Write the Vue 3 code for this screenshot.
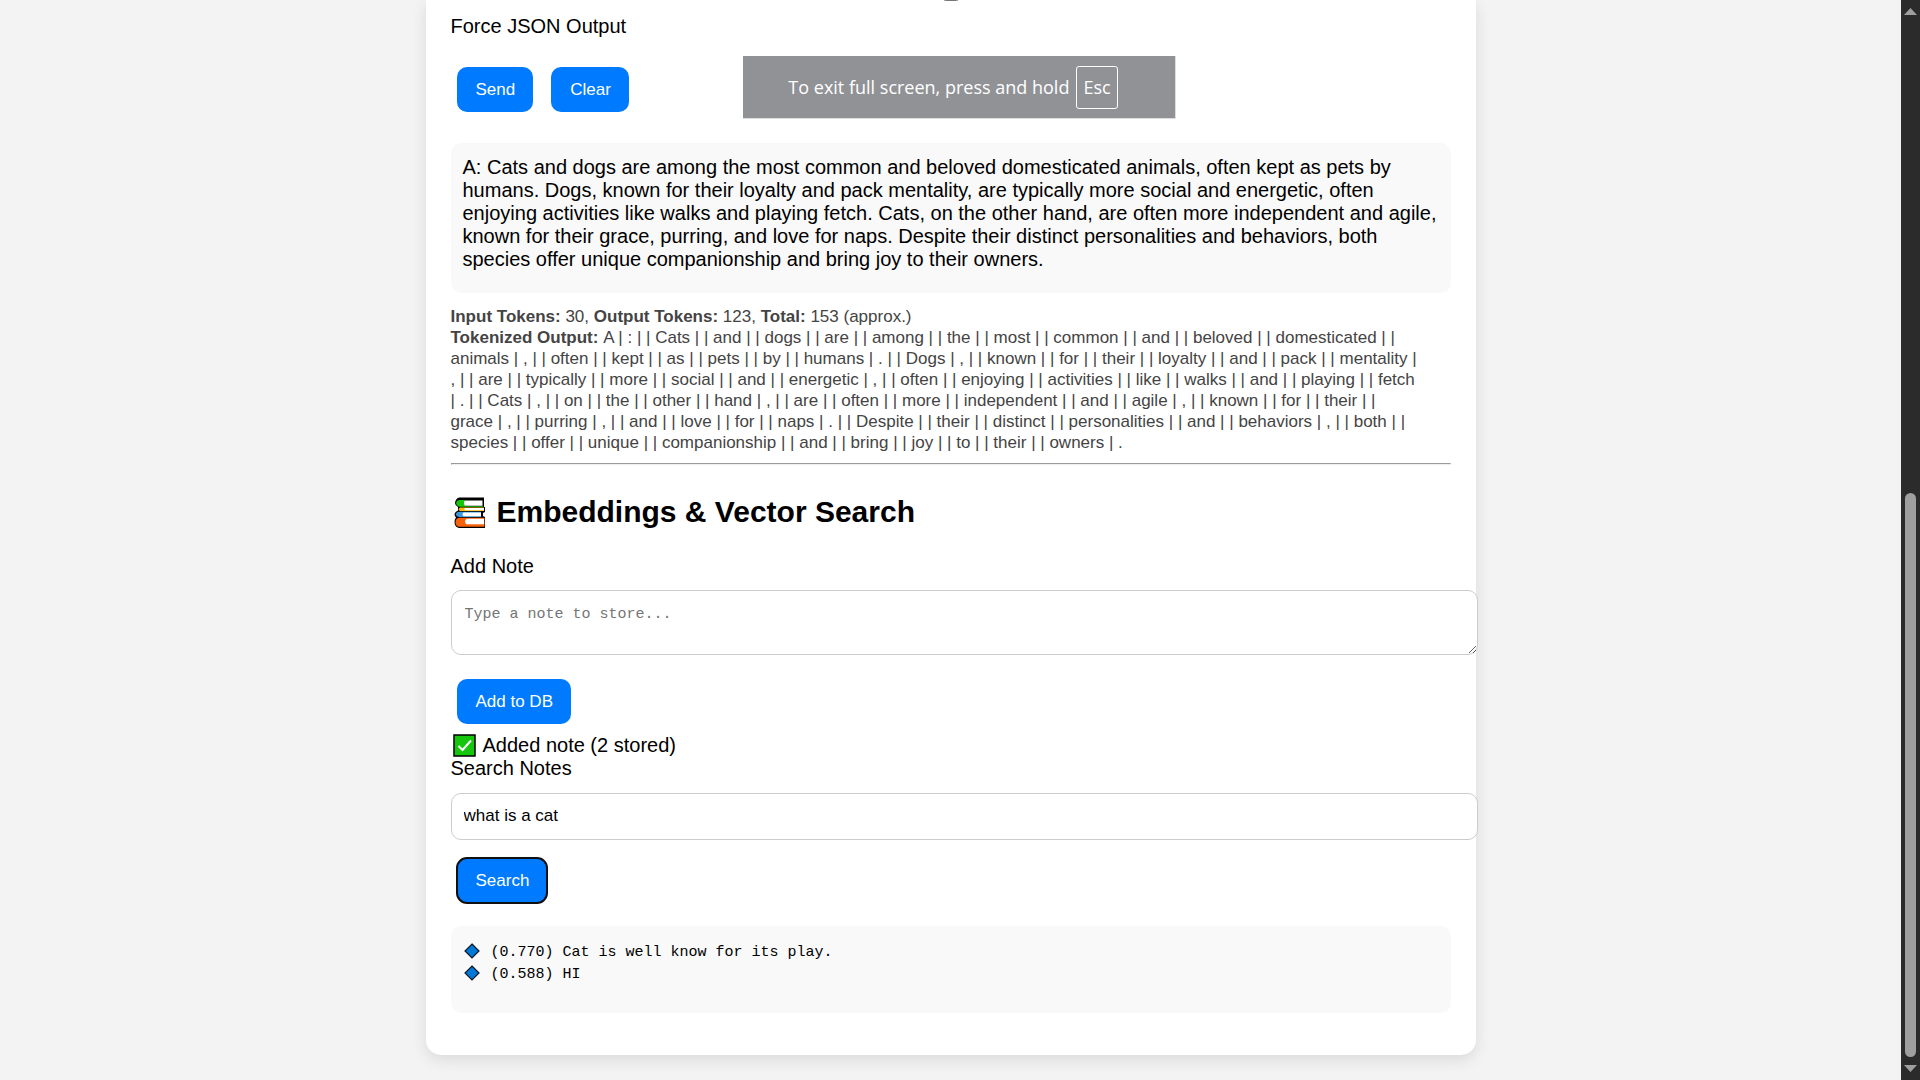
<script setup>
import { ref } from 'vue'

const forceJson = ref(false)
const note = ref('')
const query = ref('what is a cat')
const answer =
  'A: Cats and dogs are among the most common and beloved domesticated animals, often kept as pets by humans. Dogs, known for their loyalty and pack mentality, are typically more social and energetic, often enjoying activities like walks and playing fetch. Cats, on the other hand, are often more independent and agile, known for their grace, purring, and love for naps. Despite their distinct personalities and behaviors, both species offer unique companionship and bring joy to their owners.'

const tokenRows = [
  'A | : | | Cats | | and | | dogs | | are | | among | | the | | most | | common | | and | | beloved | | domesticated | |',
  'animals | , | | often | | kept | | as | | pets | | by | | humans | . | | Dogs | , | | known | | for | | their | | loyalty | | and | | pack | | mentality |',
  ', | | are | | typically | | more | | social | | and | | energetic | , | | often | | enjoying | | activities | | like | | walks | | and | | playing | | fetch',
  '| . | | Cats | , | | on | | the | | other | | hand | , | | are | | often | | more | | independent | | and | | agile | , | | known | | for | | their | |',
  'grace | , | | purring | , | | and | | love | | for | | naps | . | | Despite | | their | | distinct | | personalities | | and | | behaviors | , | | both | |',
  'species | | offer | | unique | | companionship | | and | | bring | | joy | | to | | their | | owners | .'
]

const results = [
  { score: '0.770', text: 'Cat is well know for its play.' },
  { score: '0.588', text: 'HI' }
]
</script>

<template>
  <div class="screen">
    <main class="page">
      <div class="card">
        <input id="force-json" v-model="forceJson" class="check" type="checkbox" />
        <label class="label" for="force-json">Force JSON Output</label>

        <div class="actions">
          <button class="btn" type="button">Send</button>
          <button class="btn" type="button">Clear</button>
        </div>

        <div class="output answer">{{ answer }}</div>

        <div class="stats">
          <div><b>Input Tokens:</b> 30, <b>Output Tokens:</b> 123, <b>Total:</b> 153 (approx.)</div>
          <div v-for="(row, index) in tokenRows" :key="index">
            <b v-if="index === 0">Tokenized Output: </b>{{ row }}
          </div>
        </div>

        <hr class="rule" />

        <h2 class="title">
          <svg class="books" viewBox="0 0 37 34" aria-hidden="true">
            <path d="M8 2.500H33V12H34V17L32 18V21L34 22V33H8Q3.500 32 3.500 27Q3.500 24 5 22.500Q3.500 21 3.500 19Q4 16.500 7 15.500V12Q4 10.500 4 8Q4.500 3.500 8 2.500Z" fill="#000" />
            <path d="M8 5H14V11H32V11.800H8Q5 10.500 5 8Q5.500 5.500 8 5Z" fill="#16c60c" />
            <path d="M14 5.500H31.500V10.800H14Q12 8 14 5.500Z" fill="#fff" />
            <path d="M9 12.500H33V16H9Q6.500 14 9 12.500Z" fill="#ffb900" />
            <path d="M14 13H33V15.300H14Q12.500 14 14 13Z" fill="#fff" />
            <path d="M8 16.800H30V22H8Q5 21.500 5 19.300Q5 17.300 8 16.800Z" fill="#3a96dd" />
            <path d="M12.500 17.600H30V21.300H12.500Q10.500 19.500 12.500 17.600Z" fill="#fff" />
            <path d="M8 22.800H33.500V31.700H8Q4.500 31 4.500 27.200Q4.500 23.500 8 22.800Z" fill="#f7630c" />
            <path d="M15.500 23.700H33V29.300H15.500Q12.500 26.500 15.500 23.700Z" fill="#fff" />
          </svg>
          <span>Embeddings &amp; Vector Search</span>
        </h2>

        <label class="label" for="note">Add Note</label>
        <textarea id="note" v-model="note" class="field note" placeholder="Type a note to store..."></textarea>

        <div class="actions">
          <button class="btn" type="button">Add to DB</button>
        </div>

        <div class="status">
          <svg class="tick" viewBox="0 0 23 23" aria-hidden="true">
            <rect x="1" y="1" width="21" height="21" fill="#16c60c" stroke="#000" stroke-width="1.500" />
            <path d="M5.500 12L9.500 16L18 6.500" fill="none" stroke="#fff" stroke-width="2" />
          </svg>
          <span>Added note (2 stored)</span>
        </div>

        <label class="label" for="query">Search Notes</label>
        <input id="query" v-model="query" class="field query" type="text" />

        <div class="actions search">
          <button class="btn active" type="button">Search</button>
        </div>

        <div class="output results">
          <div v-for="result in results" :key="result.score" class="result">
            <svg class="diamond" viewBox="0 0 16 16" aria-hidden="true">
              <path d="M8 1L15 8L8 15L1 8Z" fill="#0078d7" stroke="#101820" stroke-width="1.200" />
            </svg>
            <span>({{ result.score }}) {{ result.text }}</span>
          </div>
        </div>
      </div>
    </main>

    <div class="scrollbar" aria-hidden="true">
      <svg class="arrow" viewBox="0 0 13 7"><path d="M6.500 0L13 7H0Z" fill="#9f9f9f" /></svg>
      <div class="track"><div class="thumb"></div></div>
      <svg class="arrow" viewBox="0 0 13 7"><path d="M0 0H13L6.500 7Z" fill="#9f9f9f" /></svg>
    </div>

    <div class="hint">
      <span>To exit full screen, press and hold</span>
      <kbd class="key">Esc</kbd>
    </div>
  </div>
</template>

<style>
body {
  background: #f3f3f3;
}
</style>

<style scoped>
.screen {
  position: relative;
  display: flex;
  min-height: 100vh;
  font: 20px/23px "Liberation Sans", Arial, sans-serif;
  color: #000;
}
.page {
  flex: 1;
  display: flex;
  justify-content: center;
  align-items: flex-start;
  padding-bottom: 25px;
  overflow: hidden;
}
.card {
  box-sizing: border-box;
  width: 100%;
  max-width: 1050px;
  padding: 0 25px 42px;
  background: #fff;
  border-radius: 0 0 15px 15px;
  box-shadow: 0 5px 15px rgba(0, 0, 0, 0.1);
}
.check {
  display: block;
  width: 16px;
  height: 16px;
  margin: -15px auto 14px;
}
.label {
  display: block;
}
.actions {
  display: flex;
  gap: 18px;
  padding-left: 6px;
  margin-top: 24px;
}
.label + .actions {
  margin-top: 29px;
}
.actions.search {
  margin-top: 18px;
}
.btn {
  height: 45px;
  padding: 0 18px 0 19px;
  border: 0;
  border-radius: 10px;
  background: #007bff;
  color: #fff;
  font: 17px/20px "Liberation Sans", Arial, sans-serif;
}
.btn.active {
  outline: 2px solid #101010;
  outline-offset: -1px;
}
.output {
  box-sizing: border-box;
  padding: 13px 12px 12px;
  border-radius: 10px;
  background: #f9f9f9;
}
.answer {
  min-height: 150px;
  margin-top: 31px;
}
.stats {
  margin-top: 13px;
  font-size: 17px;
  line-height: 21px;
  color: #444;
  white-space: nowrap;
}
.rule {
  margin: 10px 0 0;
  border: 1px solid;
  border-color: #9a9a9a #eee #eee #9a9a9a;
}
.title {
  display: flex;
  align-items: center;
  gap: 9px;
  margin: 30px 0 26px;
  font-size: 30px;
  line-height: 34px;
}
.books {
  width: 37px;
  height: 34px;
}
.field {
  box-sizing: content-box;
  display: block;
  width: 100%;
  margin: 12px 0 0;
  padding: 12px;
  border: 1px solid #ccc;
  border-radius: 10px;
  background: #fff;
  color: #000;
}
.note {
  height: 39px;
  padding: 14px 12px 10px 13px;
  font: 15px/20px Consolas, "Liberation Mono", monospace;
}
.note::placeholder {
  color: #757575;
}
.query {
  height: 21px;
  margin-top: 13px;
  padding: 11px 13px 13px 12px;
  font: 17px/20px "Liberation Sans", Arial, sans-serif;
}
.status {
  display: flex;
  align-items: center;
  gap: 7px;
  margin-top: 10px;
  padding-left: 2px;
}
.tick {
  width: 23px;
  height: 23px;
}
.results {
  min-height: 87px;
  margin-top: 23px;
  padding: 15px 12px 12px;
  font: 15px/22px Consolas, "Liberation Mono", monospace;
}
.result {
  display: flex;
  align-items: flex-end;
  gap: 11px;
  height: 22px;
  padding-left: 1px;
}
.result span {
  line-height: 20px;
}
.diamond {
  width: 16px;
  height: 16px;
  margin-bottom: 4px;
}
.scrollbar {
  box-sizing: border-box;
  display: flex;
  flex-direction: column;
  align-items: center;
  width: 19px;
  padding: 8px 0;
  background: #2b2b2b;
}
.arrow {
  width: 13px;
  height: 7px;
}
.track {
  flex: 1;
  display: flex;
  flex-direction: column;
  margin: 8px 0;
}
.track::before {
  content: "";
  flex: 5;
}
.thumb {
  flex: 6;
  width: 11px;
  border-radius: 6px;
  background: #9f9f9f;
}
.hint {
  position: absolute;
  top: 56px;
  left: 743px;
  box-sizing: border-box;
  display: flex;
  align-items: center;
  justify-content: center;
  gap: 7px;
  width: 433px;
  height: 63px;
  padding-right: 12px;
  border: solid #dedede;
  border-width: 0 1px 1px 0;
  background: #919296;
  color: #fff;
  font: 18px/24px "Segoe UI", "Open Sans", sans-serif;
}
.key {
  box-sizing: border-box;
  height: 43px;
  padding: 8px 6px;
  border: 1px solid #fff;
  border-radius: 3px;
  font: inherit;
}
</style>
